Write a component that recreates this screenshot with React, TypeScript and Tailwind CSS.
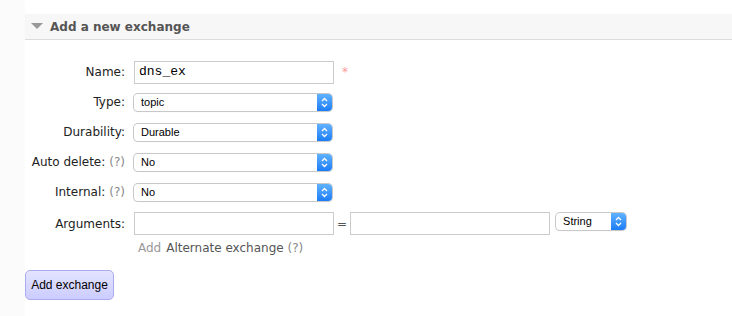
import React from 'react';

// macOS-style select box with blue stepper at the right
function FakeSelect({ value, width }: { value: string; width: string }) {
  return (
    <div
      className={`${width} h-[17px] flex items-stretch rounded-[4px] bg-white shadow-[0_0_0_1px_#c8c8c8,0_1px_1px_rgba(0,0,0,0.15)] overflow-hidden`}
    >
      <span className="flex-1 pl-[7px] text-[11px] leading-[17px] text-black font-['Liberation_Sans',Arial,sans-serif]">
        {value}
      </span>
      <span className="w-[15px] flex items-center justify-center bg-gradient-to-b from-[#5fb2ff] to-[#1a7cf5]">
        <svg width="7" height="11" viewBox="0 0 7 11" fill="none">
          <path d="M1 4 L3.5 1.5 L6 4" stroke="white" strokeWidth="1.3" />
          <path d="M1 7 L3.5 9.5 L6 7" stroke="white" strokeWidth="1.3" />
        </svg>
      </span>
    </div>
  );
}

function Help() {
  return <span className="text-[#888] ml-[4px]">(?)</span>;
}

function Row({ label, help, children }: { label: string; help?: boolean; children: React.ReactNode }) {
  return (
    <div className="flex items-center h-[30px]">
      <div className="w-[100px] text-right whitespace-nowrap">
        {label}
        {help && <Help />}
      </div>
      <div className="flex items-center pl-[9px]">{children}</div>
    </div>
  );
}

export default function App() {
  return (
    <div className="w-[732px] h-[316px] flex bg-white text-[12px] text-[#222] font-['DejaVu_Sans',Verdana,sans-serif] overflow-hidden">
      {/* left gutter */}
      <div className="w-[25px] bg-[#fbfbfb] shrink-0" />

      <div className="flex-1 pt-[14px]">
        {/* Section header */}
        <div className="h-[26px] flex items-center bg-[#f7f7f7] border-b border-[#dcdcdc]">
          <svg width="12" height="8" viewBox="0 0 12 8" className="ml-[6px] mr-[7px]">
            <path d="M0 0 H12 L6 6 Z" fill="#999" />
          </svg>
          <span className="font-bold text-[12px] text-[#555]">Add a new exchange</span>
        </div>

        {/* Form */}
        <div className="pt-[17px]">
          <Row label="Name:">
            <div className="w-[200px] h-[23px] border border-[#cccccc] bg-white flex items-center pl-[4px] text-[13px] text-black font-['Liberation_Mono','Courier_New',monospace]">
              dns_ex
            </div>
            <span className="ml-[8px] text-[#f99] text-[12px] leading-none">*</span>
          </Row>
          <Row label="Type:">
            <FakeSelect value="topic" width="w-[198px]" />
          </Row>
          <Row label="Durability:">
            <FakeSelect value="Durable" width="w-[198px]" />
          </Row>
          <Row label="Auto delete:" help>
            <FakeSelect value="No" width="w-[198px]" />
          </Row>
          <Row label="Internal:" help>
            <FakeSelect value="No" width="w-[198px]" />
          </Row>
          <div className="flex items-center h-[33px]">
            <div className="w-[100px] text-right">Arguments:</div>
            <div className="flex items-center pl-[9px]">
              <div className="w-[200px] h-[23px] border border-[#cccccc] bg-white" />
              <span className="mx-[3px] text-[#555]">=</span>
              <div className="w-[200px] h-[23px] border border-[#cccccc] bg-white" />
              <div className="ml-[6px] -mt-[4px]">
                <FakeSelect value="String" width="w-[70px]" />
              </div>
            </div>
          </div>
          <div className="flex items-center h-[16px] pl-[113px] text-[#555]">
            <span className="text-[#999]">Add</span>
            <span className="ml-[5px]">
              Alternate exchange <span className="text-[#888]">(?)</span>
            </span>
          </div>
        </div>

        <div className="pt-[14px]">
          <button className="w-[89px] h-[30px] rounded-[5px] border border-[#aaaaee] bg-gradient-to-b from-[#e4e4ff] to-[#ccccff] text-[12px] text-black font-['Liberation_Sans',Arial,sans-serif]">
            Add exchange
          </button>
        </div>
      </div>
    </div>
  );
}
